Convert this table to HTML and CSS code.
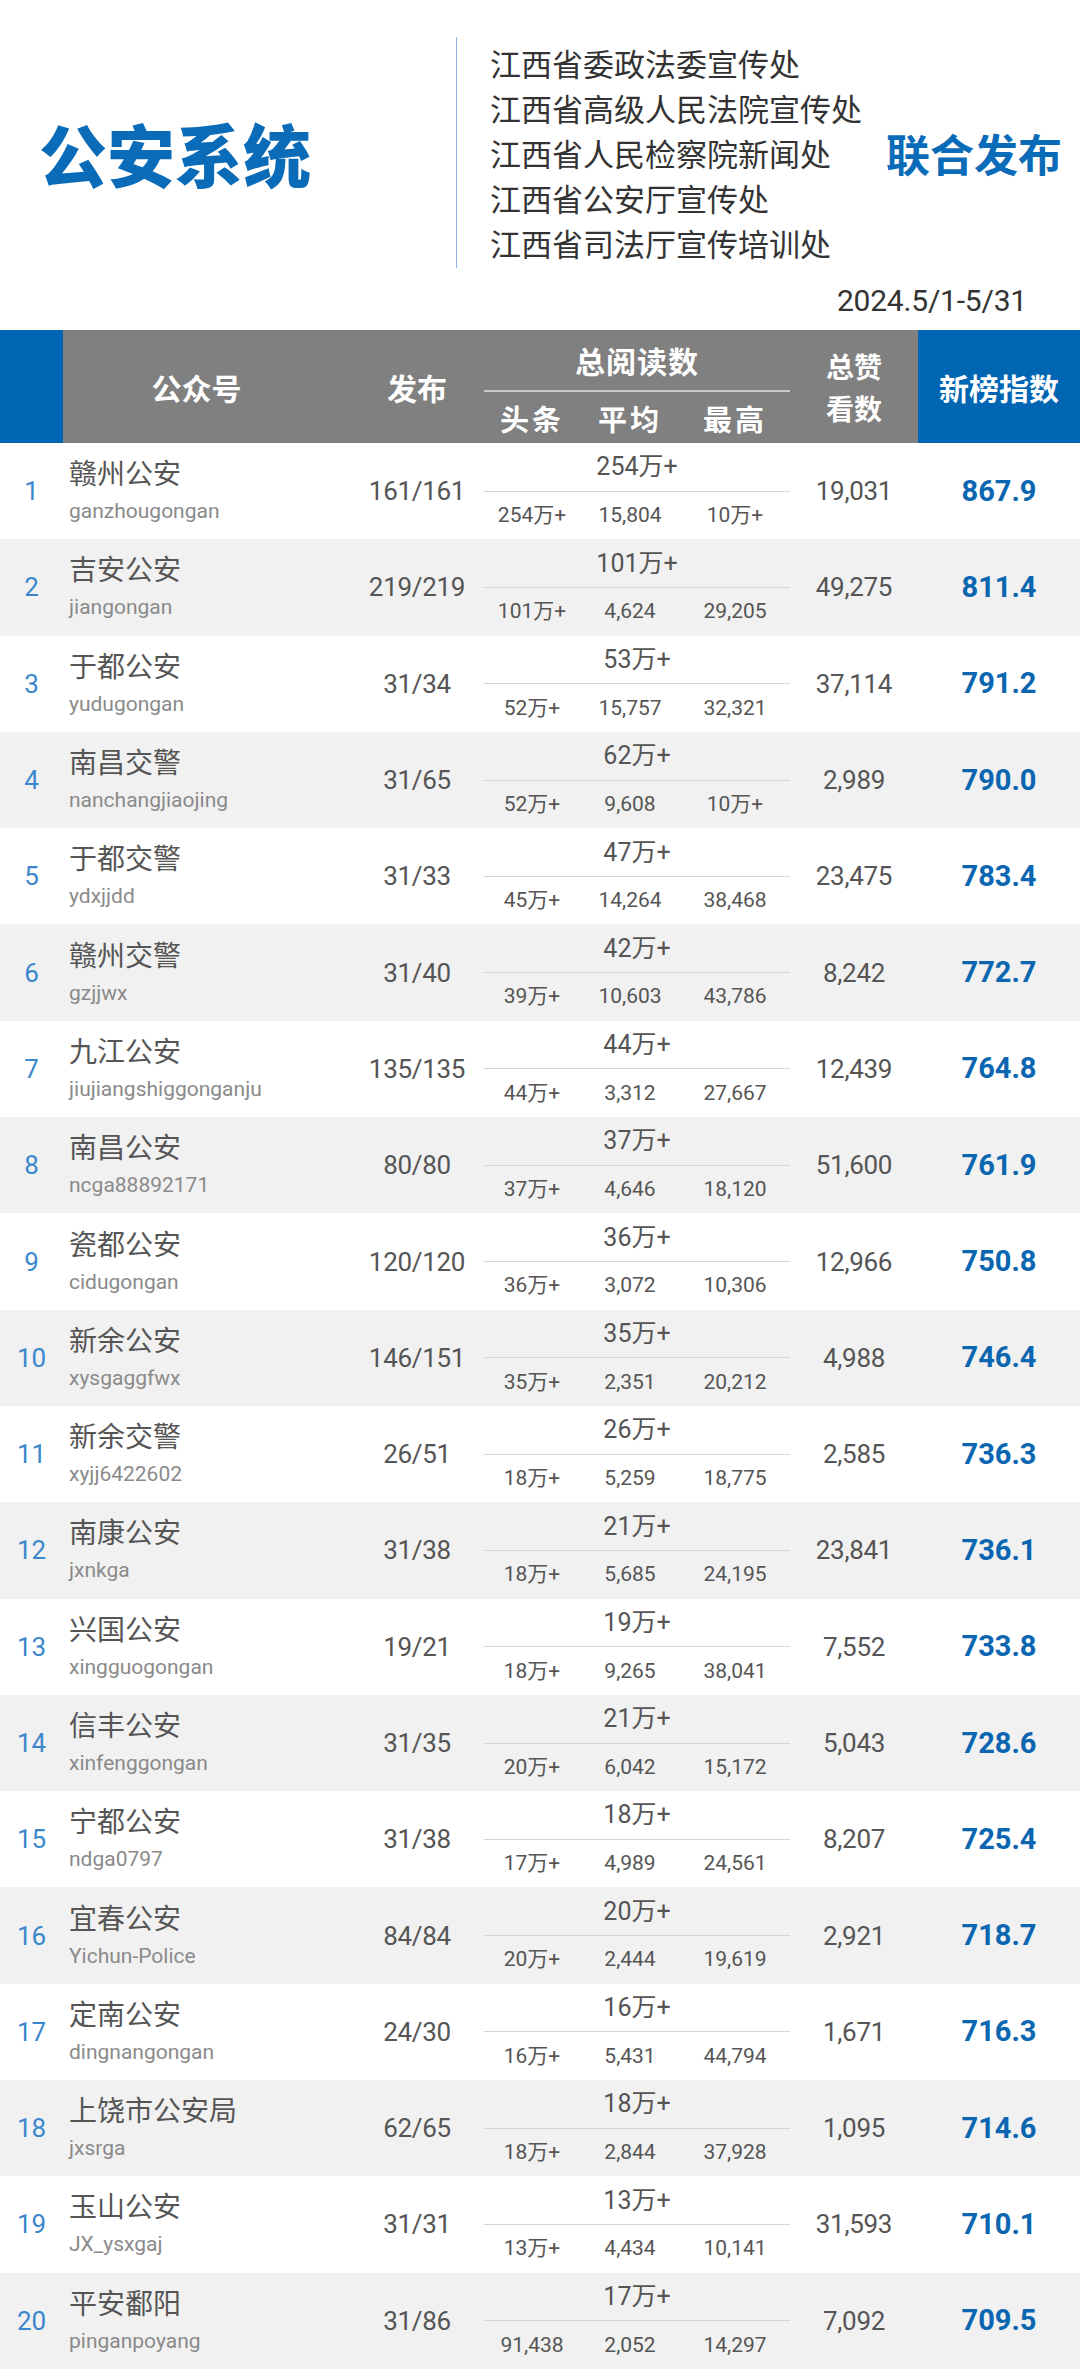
FILE: index.html
```html
<!DOCTYPE html>
<html lang="zh-CN">
<head>
<meta charset="utf-8">
<title>公安系统</title>
<link rel="stylesheet" href="styles.css">
</head>
<body>
<div class="top">
  <div class="brand">
    <div class="title">公安系统</div>
    <div class="vline"></div>
    <div class="orgs">
      <div>江西省委政法委宣传处</div>
      <div>江西省高级人民法院宣传处</div>
      <div>江西省人民检察院新闻处</div>
      <div>江西省公安厅宣传处</div>
      <div>江西省司法厅宣传培训处</div>
    </div>
    <div class="joint">联合发布</div>
  </div>
  <div class="date">2024.5/1-5/31</div>
</div>

<div class="grid thead">
  <div class="h-blue"></div>
  <div class="h-name">公众号</div>
  <div class="h-pub">发布</div>
  <div class="h-reads">
    <div class="h-total">总阅读数</div>
    <div class="h-line"></div>
    <div class="h-sub"><span>头条</span><span>平均</span><span>最高</span></div>
  </div>
  <div class="h-likes">总赞<br>看数</div>
  <div class="h-blue h-idx">新榜指数</div>
</div>

<div class="tbody">
  <div class="grid row"><div class="rank">1</div><div class="name"><div class="cn">赣州公安</div><div class="py">ganzhougongan</div></div><div class="pub">161/161</div><div class="reads"><div class="rtop">254万+</div><div class="rline"></div><div class="rsub"><span>254万+</span><span>15,804</span><span>10万+</span></div></div><div class="likes">19,031</div><div class="idx">867.9</div></div>
  <div class="grid row"><div class="rank">2</div><div class="name"><div class="cn">吉安公安</div><div class="py">jiangongan</div></div><div class="pub">219/219</div><div class="reads"><div class="rtop">101万+</div><div class="rline"></div><div class="rsub"><span>101万+</span><span>4,624</span><span>29,205</span></div></div><div class="likes">49,275</div><div class="idx">811.4</div></div>
  <div class="grid row"><div class="rank">3</div><div class="name"><div class="cn">于都公安</div><div class="py">yudugongan</div></div><div class="pub">31/34</div><div class="reads"><div class="rtop">53万+</div><div class="rline"></div><div class="rsub"><span>52万+</span><span>15,757</span><span>32,321</span></div></div><div class="likes">37,114</div><div class="idx">791.2</div></div>
  <div class="grid row"><div class="rank">4</div><div class="name"><div class="cn">南昌交警</div><div class="py">nanchangjiaojing</div></div><div class="pub">31/65</div><div class="reads"><div class="rtop">62万+</div><div class="rline"></div><div class="rsub"><span>52万+</span><span>9,608</span><span>10万+</span></div></div><div class="likes">2,989</div><div class="idx">790.0</div></div>
  <div class="grid row"><div class="rank">5</div><div class="name"><div class="cn">于都交警</div><div class="py">ydxjjdd</div></div><div class="pub">31/33</div><div class="reads"><div class="rtop">47万+</div><div class="rline"></div><div class="rsub"><span>45万+</span><span>14,264</span><span>38,468</span></div></div><div class="likes">23,475</div><div class="idx">783.4</div></div>
  <div class="grid row"><div class="rank">6</div><div class="name"><div class="cn">赣州交警</div><div class="py">gzjjwx</div></div><div class="pub">31/40</div><div class="reads"><div class="rtop">42万+</div><div class="rline"></div><div class="rsub"><span>39万+</span><span>10,603</span><span>43,786</span></div></div><div class="likes">8,242</div><div class="idx">772.7</div></div>
  <div class="grid row"><div class="rank">7</div><div class="name"><div class="cn">九江公安</div><div class="py">jiujiangshiggonganju</div></div><div class="pub">135/135</div><div class="reads"><div class="rtop">44万+</div><div class="rline"></div><div class="rsub"><span>44万+</span><span>3,312</span><span>27,667</span></div></div><div class="likes">12,439</div><div class="idx">764.8</div></div>
  <div class="grid row"><div class="rank">8</div><div class="name"><div class="cn">南昌公安</div><div class="py">ncga88892171</div></div><div class="pub">80/80</div><div class="reads"><div class="rtop">37万+</div><div class="rline"></div><div class="rsub"><span>37万+</span><span>4,646</span><span>18,120</span></div></div><div class="likes">51,600</div><div class="idx">761.9</div></div>
  <div class="grid row"><div class="rank">9</div><div class="name"><div class="cn">瓷都公安</div><div class="py">cidugongan</div></div><div class="pub">120/120</div><div class="reads"><div class="rtop">36万+</div><div class="rline"></div><div class="rsub"><span>36万+</span><span>3,072</span><span>10,306</span></div></div><div class="likes">12,966</div><div class="idx">750.8</div></div>
  <div class="grid row"><div class="rank">10</div><div class="name"><div class="cn">新余公安</div><div class="py">xysgaggfwx</div></div><div class="pub">146/151</div><div class="reads"><div class="rtop">35万+</div><div class="rline"></div><div class="rsub"><span>35万+</span><span>2,351</span><span>20,212</span></div></div><div class="likes">4,988</div><div class="idx">746.4</div></div>
  <div class="grid row"><div class="rank">11</div><div class="name"><div class="cn">新余交警</div><div class="py">xyjj6422602</div></div><div class="pub">26/51</div><div class="reads"><div class="rtop">26万+</div><div class="rline"></div><div class="rsub"><span>18万+</span><span>5,259</span><span>18,775</span></div></div><div class="likes">2,585</div><div class="idx">736.3</div></div>
  <div class="grid row"><div class="rank">12</div><div class="name"><div class="cn">南康公安</div><div class="py">jxnkga</div></div><div class="pub">31/38</div><div class="reads"><div class="rtop">21万+</div><div class="rline"></div><div class="rsub"><span>18万+</span><span>5,685</span><span>24,195</span></div></div><div class="likes">23,841</div><div class="idx">736.1</div></div>
  <div class="grid row"><div class="rank">13</div><div class="name"><div class="cn">兴国公安</div><div class="py">xingguogongan</div></div><div class="pub">19/21</div><div class="reads"><div class="rtop">19万+</div><div class="rline"></div><div class="rsub"><span>18万+</span><span>9,265</span><span>38,041</span></div></div><div class="likes">7,552</div><div class="idx">733.8</div></div>
  <div class="grid row"><div class="rank">14</div><div class="name"><div class="cn">信丰公安</div><div class="py">xinfenggongan</div></div><div class="pub">31/35</div><div class="reads"><div class="rtop">21万+</div><div class="rline"></div><div class="rsub"><span>20万+</span><span>6,042</span><span>15,172</span></div></div><div class="likes">5,043</div><div class="idx">728.6</div></div>
  <div class="grid row"><div class="rank">15</div><div class="name"><div class="cn">宁都公安</div><div class="py">ndga0797</div></div><div class="pub">31/38</div><div class="reads"><div class="rtop">18万+</div><div class="rline"></div><div class="rsub"><span>17万+</span><span>4,989</span><span>24,561</span></div></div><div class="likes">8,207</div><div class="idx">725.4</div></div>
  <div class="grid row"><div class="rank">16</div><div class="name"><div class="cn">宜春公安</div><div class="py">Yichun-Police</div></div><div class="pub">84/84</div><div class="reads"><div class="rtop">20万+</div><div class="rline"></div><div class="rsub"><span>20万+</span><span>2,444</span><span>19,619</span></div></div><div class="likes">2,921</div><div class="idx">718.7</div></div>
  <div class="grid row"><div class="rank">17</div><div class="name"><div class="cn">定南公安</div><div class="py">dingnangongan</div></div><div class="pub">24/30</div><div class="reads"><div class="rtop">16万+</div><div class="rline"></div><div class="rsub"><span>16万+</span><span>5,431</span><span>44,794</span></div></div><div class="likes">1,671</div><div class="idx">716.3</div></div>
  <div class="grid row"><div class="rank">18</div><div class="name"><div class="cn">上饶市公安局</div><div class="py">jxsrga</div></div><div class="pub">62/65</div><div class="reads"><div class="rtop">18万+</div><div class="rline"></div><div class="rsub"><span>18万+</span><span>2,844</span><span>37,928</span></div></div><div class="likes">1,095</div><div class="idx">714.6</div></div>
  <div class="grid row"><div class="rank">19</div><div class="name"><div class="cn">玉山公安</div><div class="py">JX_ysxgaj</div></div><div class="pub">31/31</div><div class="reads"><div class="rtop">13万+</div><div class="rline"></div><div class="rsub"><span>13万+</span><span>4,434</span><span>10,141</span></div></div><div class="likes">31,593</div><div class="idx">710.1</div></div>
  <div class="grid row"><div class="rank">20</div><div class="name"><div class="cn">平安鄱阳</div><div class="py">pinganpoyang</div></div><div class="pub">31/86</div><div class="reads"><div class="rtop">17万+</div><div class="rline"></div><div class="rsub"><span>91,438</span><span>2,052</span><span>14,297</span></div></div><div class="likes">7,092</div><div class="idx">709.5</div></div>
</div>
</body>
</html>
```

FILE: styles.css
```css
html, body {
  margin: 0;
  padding: 0;
  background: #ffffff;
}
body {
  width: 1080px;
  font-family: Roboto, "Noto Sans CJK SC", sans-serif;
  color: #555555;
}

/* ---------- top banner ---------- */
.top {
  height: 330px;
  display: flex;
  flex-direction: column;
}
.brand {
  display: flex;
  align-items: center;
  height: 231px;
  margin-top: 37px;
}
.title {
  width: 456px;
  box-sizing: border-box;
  padding-left: 39px;
  font-family: "Noto Sans CJK SC", sans-serif;
  font-weight: 900;
  font-size: 68px;
  line-height: 1;
  color: #0a6cb8;
}
.vline {
  width: 1px;
  align-self: stretch;
  background: #8fb6da;
}
.orgs {
  padding-left: 33px;
  font-family: "Noto Sans CJK SC", sans-serif;
  font-size: 31px;
  line-height: 45px;
  color: #333333;
}
.joint {
  margin-left: auto;
  padding-right: 18px;
  font-family: "Noto Sans CJK SC", sans-serif;
  font-weight: 700;
  font-size: 44px;
  line-height: 1;
  color: #0a6cb8;
}
.date {
  text-align: right;
  padding-right: 53px;
  padding-top: 13px;
  font-size: 30px;
  line-height: 40px;
  color: #333333;
  letter-spacing: -0.2px;
}

/* ---------- table ---------- */
.grid {
  display: grid;
  grid-template-columns: 63px 287px 134px 306px 128px 162px;
}
.thead {
  height: 113px;
  background: #808080;
  color: #ffffff;
  font-family: "Noto Sans CJK SC", sans-serif;
  font-weight: 700;
  font-size: 30px;
}
.thead > div {
  display: flex;
  align-items: center;
  justify-content: center;
}
.h-blue {
  background: #0066b3;
}
.h-name {
  padding-right: 20px;
}
.thead > .h-reads {
  flex-direction: column;
  align-items: stretch;
  justify-content: flex-start;
}
.h-total {
  height: 60px;
  display: flex;
  align-items: center;
  justify-content: center;
  letter-spacing: 1px;
}
.h-line {
  height: 2px;
  background: #c8c8c8;
}
.h-sub {
  flex: 1;
  display: grid;
  grid-template-columns: 96px 100px 110px;
  align-items: center;
  justify-items: center;
  font-size: 29px;
  letter-spacing: 3px;
}
.h-likes {
  font-size: 28px;
  line-height: 42px;
  text-align: center;
}

.tbody {
  display: flex;
  flex-direction: column;
}
.row {
  height: 96.3px;
  background: #ffffff;
}
.row:nth-child(even) {
  background: #f1f1f1;
}
.row > div {
  display: flex;
  align-items: center;
  justify-content: center;
  line-height: 1;
}
.rank {
  color: #3b87cc;
  font-size: 26px;
}
.row > .name {
  flex-direction: column;
  align-items: flex-start;
  padding-left: 6px;
  padding-bottom: 3px;
}
.cn {
  font-family: "Noto Sans CJK SC", sans-serif;
  font-size: 28px;
  line-height: 34px;
  color: #555555;
}
.py {
  font-size: 21px;
  line-height: 26px;
  margin-top: 9px;
  color: #8a8a8a;
}
.pub, .likes {
  font-size: 26px;
  letter-spacing: -0.3px;
}
.row > .reads {
  display: grid;
  grid-template-rows: 1fr 1px 1fr;
  align-items: stretch;
  justify-content: stretch;
}
.rtop {
  display: flex;
  align-items: center;
  justify-content: center;
  font-size: 25px;
}
.rline {
  background: #d6d6d6;
}
.rsub {
  display: grid;
  grid-template-columns: 96px 100px 110px;
  align-items: center;
  justify-items: center;
  font-size: 21px;
}
.idx {
  font-weight: 700;
  font-size: 29px;
  color: #0a66b0;
}
```
